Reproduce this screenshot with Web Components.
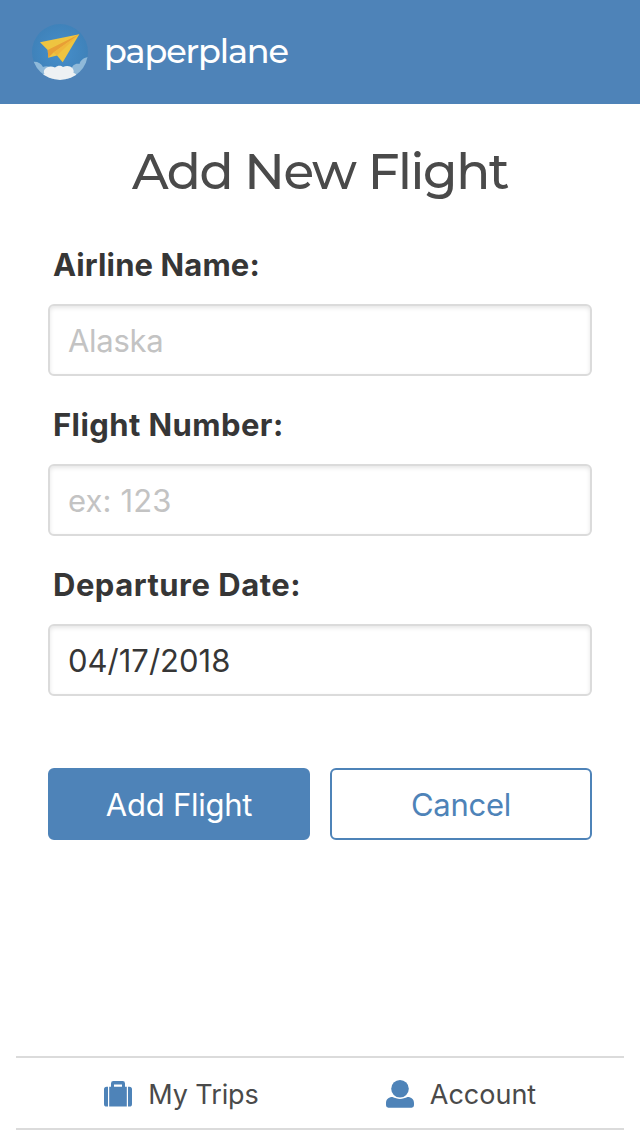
<!DOCTYPE html>
<html lang="en">
<head>
<meta charset="utf-8">
<title>paperplane</title>
<style>
html, body { margin: 0; height: 100%; background: #fff; }
body { font-family: Inter, "Liberation Sans", sans-serif; --blue: #4e83b8; --line: #dbdbdb; --ink: #363636; --grey: #4a4a4a; color: var(--grey); }
</style>
</head>
<body>
<pp-app></pp-app>
<script>
const define = (name, html, setup) => {
  const template = document.createElement('template');
  template.innerHTML = html;
  customElements.define(name, class extends HTMLElement {
    constructor() {
      super();
      this.attachShadow({ mode: 'open' }).append(template.content.cloneNode(true));
    }
    connectedCallback() { if (setup) setup(this, this.shadowRoot); }
  });
};

define('pp-logo', `
<style>:host{display:block;width:56px;height:56px} svg{display:block}</style>
<svg width="56" height="56" viewBox="0 0 56 56">
  <defs>
    <radialGradient id="sky"><stop offset="0" stop-color="#468fcb"/><stop offset="1" stop-color="#3f82ba"/></radialGradient>
    <clipPath id="disc"><circle cx="28" cy="28" r="28"/></clipPath>
  </defs>
  <g clip-path="url(#disc)">
    <rect width="56" height="56" fill="url(#sky)"/>
    <path d="M0 38C5 37 9 39 11 43C15 41 19 43 21 46L21 56H0ZM56 33C51 34 48 37 47.500 40C43 39 40 42 39.500 45L35 48V56H56Z" fill="#8fb9d9"/>
    <path d="M8 56C9 52 11 50 12.500 49.500C10 46 16 40 23 43.500C26 41 29 41.500 31 43C37 40 43 44 41.500 49C43 49 44 50 45 52L45 56Z" fill="#edf1f3"/>
    <path d="M8 18.300L47.300 10.300L30.700 38.300L25 31.500L16.300 33.700L15.700 26Z" fill="#eec440"/>
    <path d="M47.300 10.300L15.700 26L16.300 33.700L21.500 28.500Z" fill="#e89f35"/>
    <path d="M47.300 10.300L21.500 28.500L25 31.500Z" fill="#efb63b"/>
  </g>
</svg>`);

define('pp-header', `
<style>
:host{display:flex;align-items:center;gap:16px;height:104px;padding:0 32px;box-sizing:border-box;background:var(--blue);flex:none}
.name{font:500 33.5px/48px Montserrat,Inter,sans-serif;letter-spacing:-1.12px;color:#fff;white-space:nowrap;padding-bottom:2px}
</style>
<pp-logo></pp-logo><div class="name"><slot></slot></div>`);

define('pp-title', `
<style>
:host{display:block;text-align:center;font:500 50px/60px Montserrat,Inter,sans-serif;letter-spacing:-1.42px;color:var(--grey);white-space:nowrap}
</style><slot></slot>`);

define('pp-field', `
<style>
:host{display:block;height:160px}
label{display:block;height:48px;box-sizing:border-box;padding:1px 0 0 5px;font-size:31px;font-weight:700;line-height:48px;letter-spacing:var(--label-track,0);color:var(--ink)}
input{display:block;box-sizing:border-box;width:100%;height:72px;margin:16px 0 0;padding:1px 18px 0;border:2px solid var(--line);border-radius:6px;box-shadow:inset 0 2px 4px rgba(10,10,10,.1);background:#fff;color:var(--ink);font:400 31px/48px Inter,sans-serif;outline:0}
input::placeholder{color:#c3c3c3;opacity:1;letter-spacing:var(--hint-track,0)}
</style>
<label for="control"></label><input id="control" type="text">`, (host, root) => {
  const input = root.querySelector('input');
  root.querySelector('label').textContent = host.getAttribute('label');
  input.placeholder = host.getAttribute('placeholder') || '';
  input.value = host.getAttribute('value') || '';
});

define('pp-button', `
<style>
:host{display:block;flex:1}
button{display:block;width:100%;height:72px;padding:2px 0 0;border:2px solid var(--blue);border-radius:6px;background:var(--blue);color:#fff;font:400 31px/48px Inter,sans-serif;letter-spacing:-.25px}
:host([outlined]) button{background:#fff;color:var(--blue)}
</style><button type="button"><slot></slot></button>`);

define('pp-tab', `
<style>
:host{display:flex;align-items:center;gap:16px;font-size:27px;line-height:40px;color:var(--grey);white-space:nowrap}
span{padding-top:2px}
::slotted(svg){display:block;fill:var(--blue)}
</style><slot name="icon"></slot><span><slot></slot></span>`);

define('pp-tabbar', `
<style>
:host{display:grid;grid-template-columns:280px 280px;justify-content:center;height:74px;box-sizing:border-box;margin:0 16px;padding:2px 0 0 2px;border:solid var(--line);border-width:2px 0;flex:none}
::slotted(*){justify-content:center}
</style><slot></slot>`);

define('pp-app', `
<style>
:host{display:flex;flex-direction:column;height:1136px;box-sizing:border-box;padding-bottom:6px}
main{flex:1;padding:38px 48px 0}
form{margin-top:38px}
pp-field:nth-of-type(1){--label-track:.12px;--hint-track:-.3px}
pp-field:nth-of-type(2){--label-track:.42px;--hint-track:.15px}
pp-field:nth-of-type(3){--label-track:.5px}
.actions{display:flex;gap:20px;margin-top:48px}
pp-tab:first-child{padding-left:1px;letter-spacing:-.08px}
</style>
<pp-header>paperplane</pp-header>
<main>
  <pp-title>Add New Flight</pp-title>
  <form>
    <pp-field label="Airline Name:" placeholder="Alaska"></pp-field>
    <pp-field label="Flight Number:" placeholder="ex: 123"></pp-field>
    <pp-field label="Departure Date:" value="04/17/2018"></pp-field>
    <div class="actions"><pp-button>Add Flight</pp-button><pp-button outlined>Cancel</pp-button></div>
  </form>
</main>
<pp-tabbar>
  <pp-tab><svg slot="icon" width="28" height="28" viewBox="0 0 28 28"><path fill-rule="evenodd" d="M5.200 6.700H7V3.500Q7 1.100 9.400 1.100H18.600Q21 1.100 21 3.500V6.700H22.800V26.600H5.200ZM10 4.400V6.700H18V4.400Z"/><path d="M4 6.700V26.600H2.600Q0 26.600 0 24V9.300Q0 6.700 2.600 6.700ZM24 6.700H25.400Q28 6.700 28 9.300V24Q28 26.600 25.400 26.600H24Z"/></svg>My Trips</pp-tab>
  <pp-tab><svg slot="icon" width="28" height="28" viewBox="0 0 28 28"><circle cx="14" cy="8.800" r="8.800"/><path d="M6.500 17.100C11 19.500 17 19.500 21.500 17.100C25.500 17.100 28 19.600 28 23V25.300Q28 27.700 25.600 27.700H2.400Q0 27.700 0 25.300V23C0 19.600 2.500 17.100 6.500 17.100Z"/></svg>Account</pp-tab>
</pp-tabbar>`);
</script>
</body>
</html>
